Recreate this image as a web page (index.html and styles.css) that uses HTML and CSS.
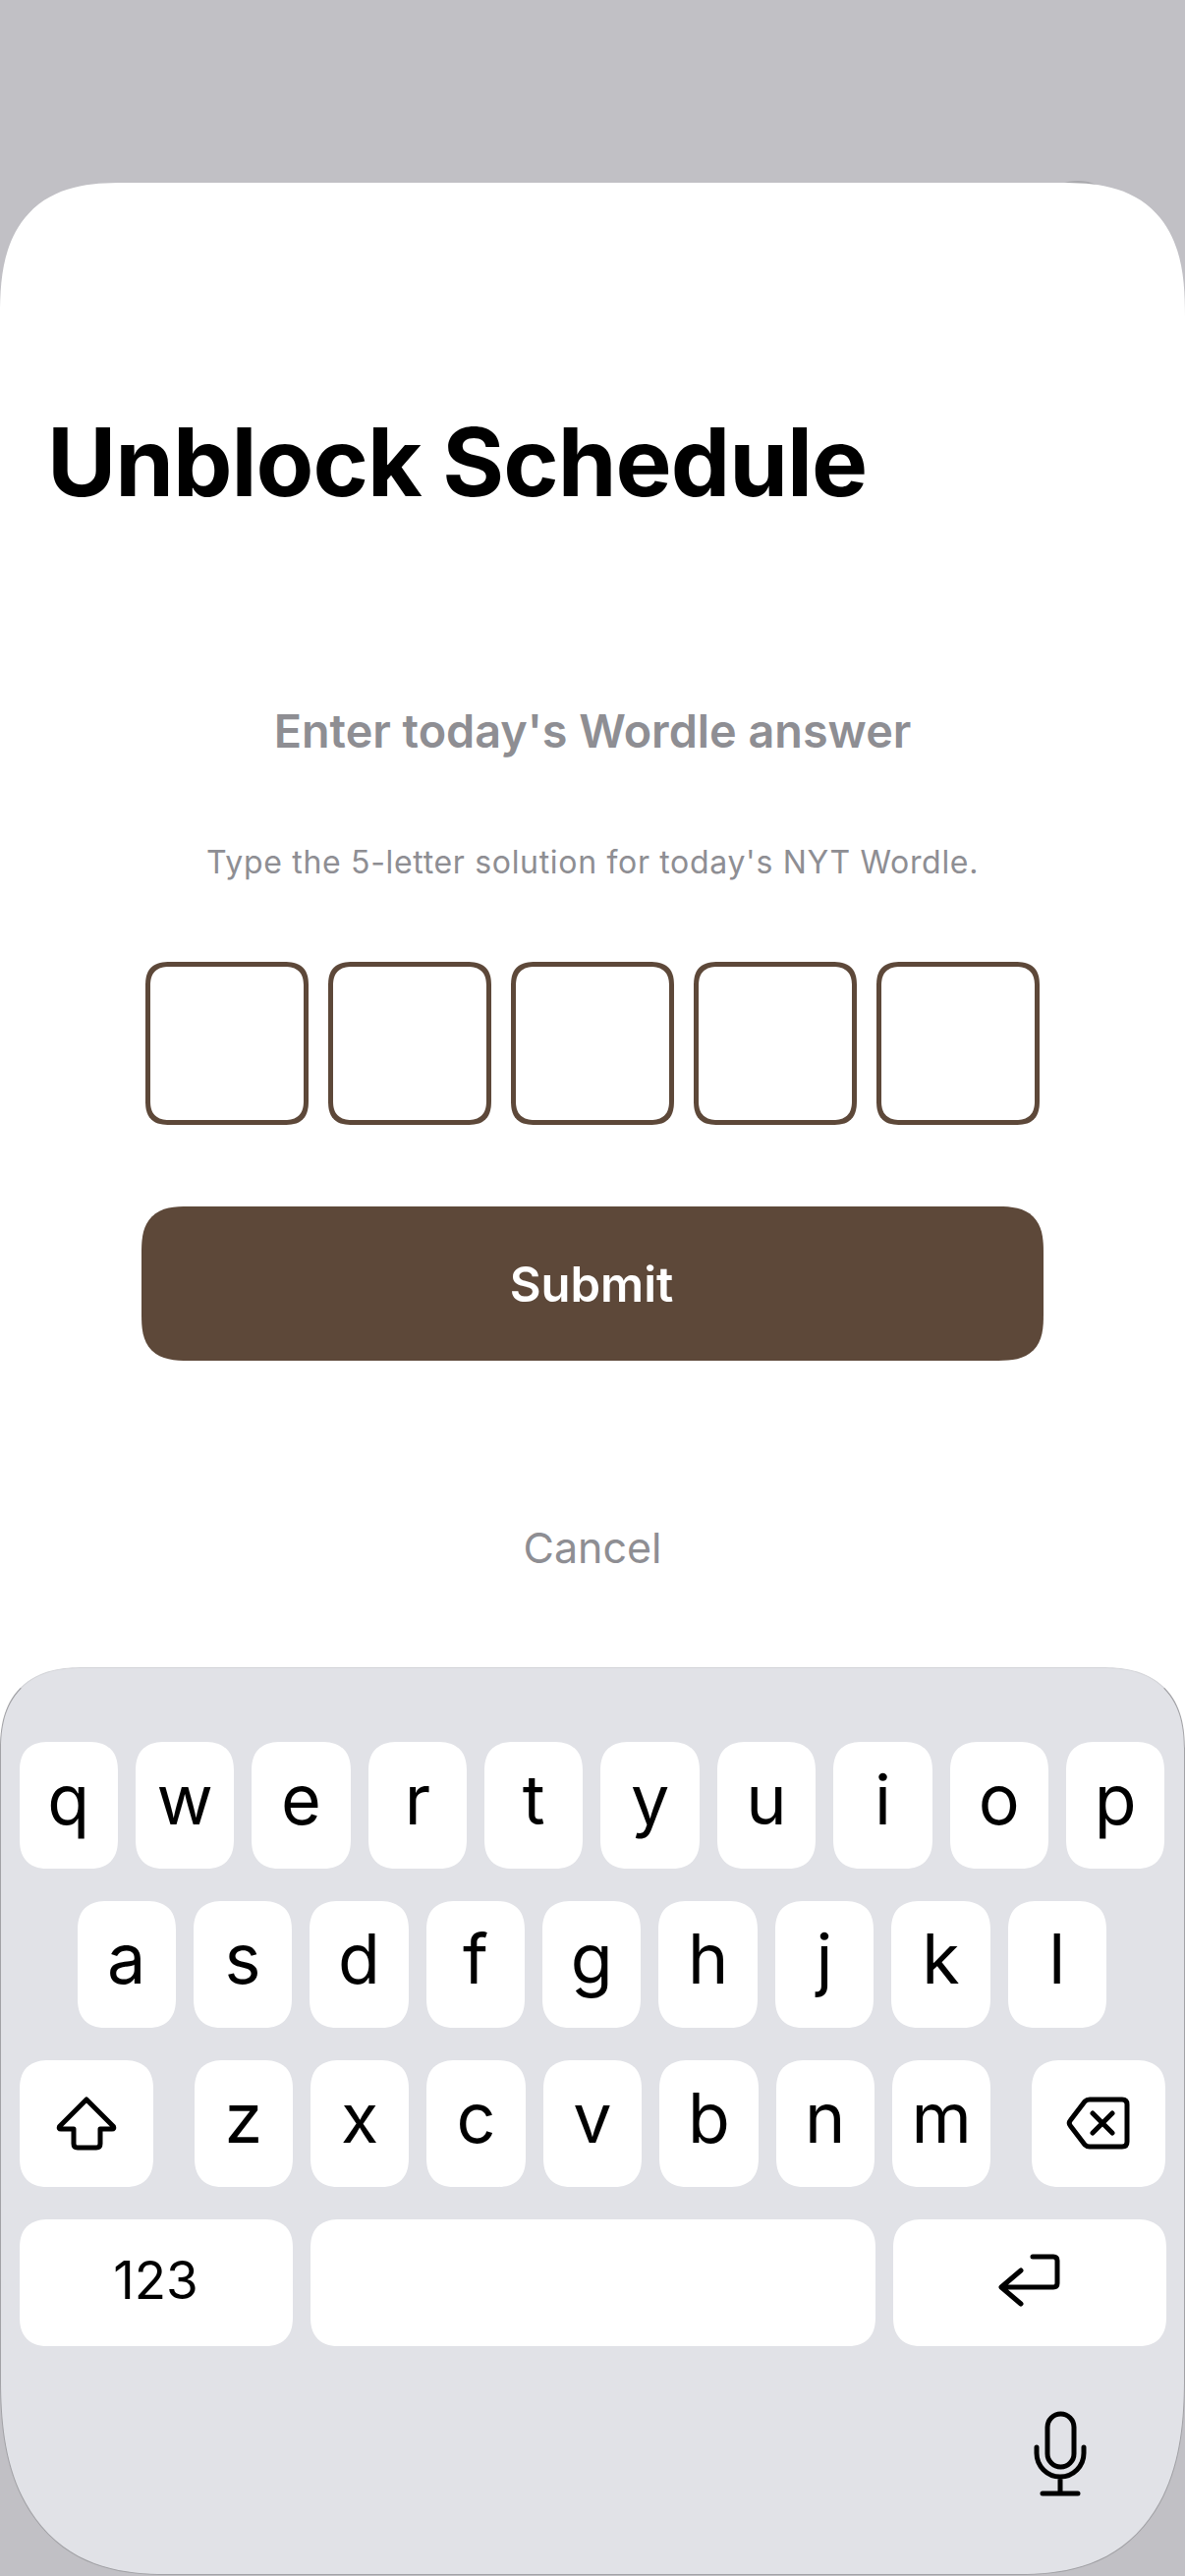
FILE: index.html
```html
<!DOCTYPE html>
<html lang="en">
<head>
<meta charset="utf-8">
<title>Unblock Schedule</title>
<link rel="stylesheet" href="styles.css">
</head>
<body>
<div class="screen">
  <div class="peek"></div>
  <main class="sheet">
    <h1 class="title">Unblock Schedule</h1>
    <section class="prompt">
      <h2 class="heading">Enter today's Wordle answer</h2>
      <p class="hint">Type the 5-letter solution for today's NYT Wordle.</p>
      <div class="boxes">
        <div class="box"></div>
        <div class="box"></div>
        <div class="box"></div>
        <div class="box"></div>
        <div class="box"></div>
      </div>
      <button class="submit">Submit</button>
      <button class="cancel">Cancel</button>
    </section>
  </main>
  <div class="keyboard">
    <div class="row">
      <div class="key">q</div><div class="key">w</div><div class="key">e</div><div class="key">r</div><div class="key">t</div><div class="key">y</div><div class="key">u</div><div class="key">i</div><div class="key">o</div><div class="key">p</div>
    </div>
    <div class="row row-home">
      <div class="key">a</div><div class="key">s</div><div class="key">d</div><div class="key">f</div><div class="key">g</div><div class="key">h</div><div class="key">j</div><div class="key">k</div><div class="key">l</div>
    </div>
    <div class="row row-shift">
      <div class="key key-mod">
        <svg class="icon icon-shift" viewBox="0 0 64 56"><path d="M32 4 L4.5 31.5 Q3.5 34 6 34 H19 V49 Q19 53 23 53 H42 Q46 53 46 49 V34 H58 Q60.5 34 59.5 31.5 Z"/></svg>
      </div>
      <div class="letters">
        <div class="key">z</div><div class="key">x</div><div class="key">c</div><div class="key">v</div><div class="key">b</div><div class="key">n</div><div class="key">m</div>
      </div>
      <div class="key key-mod">
        <svg class="icon icon-delete" viewBox="0 0 66 56"><path d="M24 4 H57 Q62 4 62 9 V47 Q62 52 57 52 H24 Q21 52 19 50 L4.5 31 Q2 28 4.5 25 L19 6 Q21 4 24 4 Z M27 18 L47 38 M47 18 L27 38"/></svg>
      </div>
    </div>
    <div class="row">
      <div class="key key-wide key-num">123</div>
      <div class="key key-space"></div>
      <div class="key key-wide">
        <svg class="icon icon-return" viewBox="0 0 66 56"><path d="M36 4 H57 Q61 4 61 8 V31 Q61 35 57 35 H4 M24 18 L4 35 L24 52"/></svg>
      </div>
    </div>
    <div class="dictation">
      <svg class="icon icon-mic" viewBox="0 0 60 90"><rect x="17" y="4" width="27" height="54" rx="13.5"/><path d="M6 38 V44 A24 24 0 0 0 54 44 V38 M30 68 V85 M12 85 H48"/></svg>
    </div>
  </div>
</div>
</body>
</html>
```

FILE: styles.css
```css
* { box-sizing: border-box; }
html, body { margin: 0; padding: 0; }
body { font-family: Inter, "Liberation Sans", sans-serif; }

.screen {
  position: relative;
  width: 1206px;
  height: 2622px;
  padding-top: 186px;
  background: #c1c0c5;
  overflow: hidden;
}

.peek {
  position: absolute;
  top: 184px;
  left: 1074px;
  width: 46px;
  height: 20px;
  border-radius: 50%;
  background: #a9a9ad;
}

.sheet {
  position: relative;
  height: 1612px;
  padding: 226px 0 0 48px;
  background: #fff;
  border-radius: 126px 126px 0 0 / 136px 136px 0 0;
  corner-shape: superellipse(1.4);
}

.title {
  margin: 0;
  font-size: 96px;
  line-height: 116px;
  font-weight: 700;
  letter-spacing: -1px;
  color: #000;
}

.prompt {
  display: flex;
  flex-direction: column;
  align-items: center;
  margin-left: -48px;
  padding-top: 188px;
}

.heading {
  margin: 0;
  font-size: 46.75px;
  line-height: 56px;
  font-weight: 600;
  color: #8e8e93;
}

.hint {
  margin: 86px 0 0;
  font-size: 32px;
  line-height: 40px;
  letter-spacing: 0.68px;
  color: #8e8e93;
}

.boxes {
  display: flex;
  gap: 20px;
  margin-top: 81px;
}

.box {
  width: 166px;
  height: 166px;
  border: 5px solid #5d4839;
  border-radius: 25px;
  corner-shape: superellipse(1.4);
}

.submit {
  width: 918px;
  height: 157px;
  margin-top: 83px;
  padding: 2px 2px 0 0;
  border: 0;
  border-radius: 48px;
  corner-shape: superellipse(1.5);
  background: #5d4839;
  color: #fff;
  font: 600 49px Inter, sans-serif;
}

.cancel {
  margin-top: 162px;
  padding: 0;
  border: 0;
  background: none;
  color: #8e8e93;
  font: 400 43px/56px Inter, sans-serif;
}

.keyboard {
  position: relative;
  height: 924px;
  margin-top: -101px;
  padding-top: 74.5px;
  display: flex;
  flex-direction: column;
  gap: 33px;
  background: #e1e2e7;
  border: 1.5px solid #a2a2a6;
  border-top-color: #d3d4d8;
  border-radius: 85px 85px 170px 170px / 85px 85px 200px 200px;
  corner-shape: superellipse(1.3);
}

.row {
  display: flex;
  gap: 18px;
  padding: 0 18.5px;
}

.row-home { padding: 0 77.5px; }
.row-shift { justify-content: space-between; }

.letters {
  display: flex;
  gap: 18px;
}

.key {
  flex: 0 0 100.4px;
  height: 129px;
  display: flex;
  align-items: center;
  justify-content: center;
  padding-bottom: 12px;
  background: #fff;
  border-radius: 30px;
  corner-shape: superellipse(1.3);
  color: #000;
  font-size: 70px;
  font-weight: 400;
}

.key-mod { flex-basis: 136px; padding-bottom: 0; }
.key-wide { flex-basis: 278px; padding-bottom: 4px; }
.key-space { flex: 1; }
.key-num { font-size: 53px; }

.dictation {
  display: flex;
  justify-content: flex-end;
  padding-right: 96px;
  margin-top: 32px;
}

.icon {
  display: block;
  fill: none;
  stroke: #000;
  stroke-width: 5;
  stroke-linecap: round;
  stroke-linejoin: round;
}

.icon-shift { width: 64px; height: 56px; }
.icon-delete { width: 66px; height: 56px; }
.icon-return { width: 66px; height: 56px; }
.icon-mic { width: 60px; height: 90px; }
```
